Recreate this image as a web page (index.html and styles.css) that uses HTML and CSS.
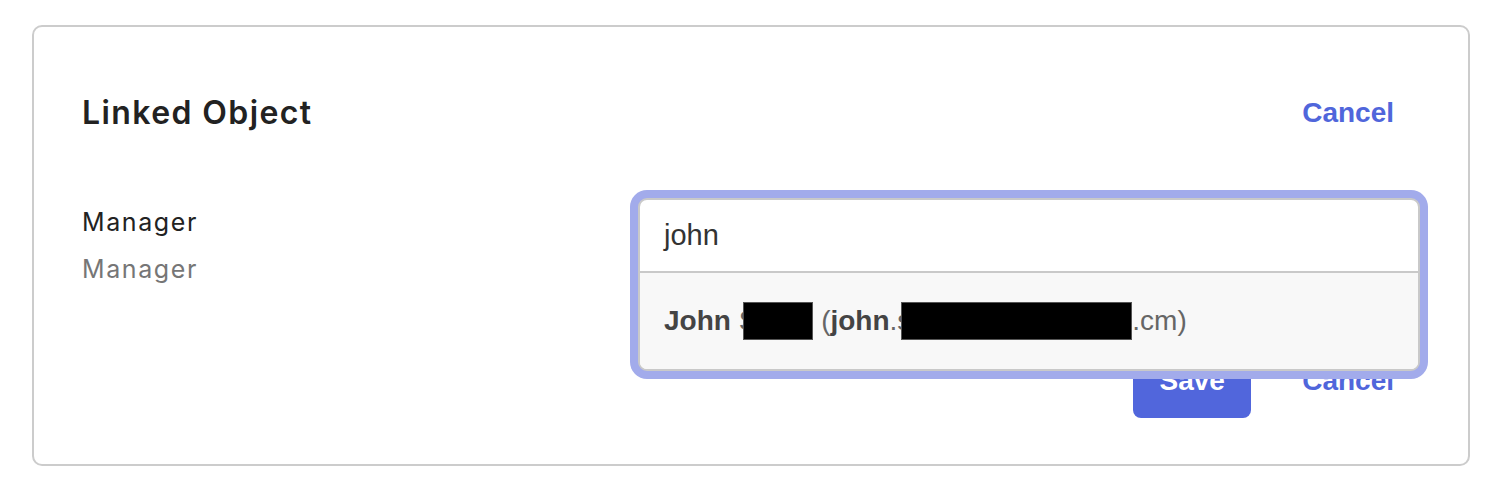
FILE: index.html
```html
<!DOCTYPE html>
<html lang="en">
<head>
<meta charset="utf-8">
<title>Linked Object</title>
<link rel="stylesheet" href="styles.css">
</head>
<body>
<section class="card">
  <header class="card-header">
    <h1 class="title">Linked Object</h1>
    <a class="link-btn" href="#">Cancel</a>
  </header>
  <div class="form-row">
    <div class="labels">
      <div class="label">Manager</div>
      <div class="label label-muted">Manager</div>
    </div>
    <div class="field">
      <div class="combo">
        <div class="combo-input">john</div>
        <ul class="combo-list">
          <li class="combo-option"><b>John</b> S<span class="redact redact-a"></span> (<b>john</b>.s<span class="redact redact-b"></span>.cm)</li>
        </ul>
      </div>
    </div>
  </div>
  <footer class="actions">
    <button class="btn-primary" type="button">Save</button>
    <a class="link-btn" href="#">Cancel</a>
  </footer>
</section>
</body>
</html>
```

FILE: styles.css
```css
* { box-sizing: border-box; }

html, body {
  margin: 0;
  background: #ffffff;
}

body {
  padding: 25px 0 0 32px;
  font-family: "Inter", "Liberation Sans", sans-serif;
  color: #222222;
}

.card {
  width: 1438px;
  height: 441px;
  border: 2px solid #cccccc;
  border-radius: 10px;
  padding: 66px 48px 46px 48px;
  display: flex;
  flex-direction: column;
}

.card-header {
  display: flex;
  justify-content: space-between;
  align-items: center;
  height: 40px;
}

.title {
  margin: 0;
  font-size: 32px;
  line-height: 40px;
  font-weight: 600;
  color: #222222;
  letter-spacing: 1.4px;
}

.link-btn {
  font-family: "Liberation Sans", Arial, sans-serif;
  font-weight: 700;
  font-size: 28px;
  line-height: 40px;
  color: #5066db;
  text-decoration: none;
  padding: 0 26px 0 24px;
}

.form-row {
  margin-top: 65px;
  display: grid;
  grid-template-columns: 556px 1fr;
}

.labels {
  padding-top: 1px;
}

.label {
  font-size: 25px;
  line-height: 47px;
  color: #222222;
  letter-spacing: 1.6px;
}

.label-muted {
  color: #767676;
}

.field {
  position: relative;
  height: 75px;
}

.combo {
  position: absolute;
  top: 0;
  left: 0;
  right: 0;
  border: 2px solid #c9c9c9;
  border-radius: 9px;
  box-shadow: 0 0 0 8px #a2abeb;
  background: #ffffff;
  font-family: "Liberation Sans", Arial, sans-serif;
  font-size: 28px;
  z-index: 2;
}

.combo-input {
  height: 73px;
  padding: 0 24px;
  display: flex;
  align-items: center;
  color: #333333;
  font-size: 29px;
  border-bottom: 2px solid #c9c9c9;
}

.combo-list {
  list-style: none;
  margin: 0;
  padding: 0;
  background: #f8f8f8;
  border-radius: 0 0 7px 7px;
}

.combo-option {
  height: 96px;
  padding: 0 24px;
  display: flex;
  align-items: center;
  color: #666666;
  white-space: pre;
}

.combo-option b {
  color: #444444;
  font-weight: 700;
}

.redact {
  display: inline-block;
  height: 38px;
  background: #000000;
  border: 1px solid #555555;
}

.redact-a { width: 70px; margin-left: -14px; }
.redact-b { width: 231px; margin-left: -10px; }

.actions {
  margin-top: auto;
  display: flex;
  justify-content: flex-end;
  align-items: center;
  gap: 27px;
}

.btn-primary {
  width: 118px;
  height: 74px;
  border: 0;
  border-radius: 8px;
  background: #5166dc;
  color: #ffffff;
  font-family: "Liberation Sans", Arial, sans-serif;
  font-weight: 700;
  font-size: 28px;
  padding: 0;
}
```
